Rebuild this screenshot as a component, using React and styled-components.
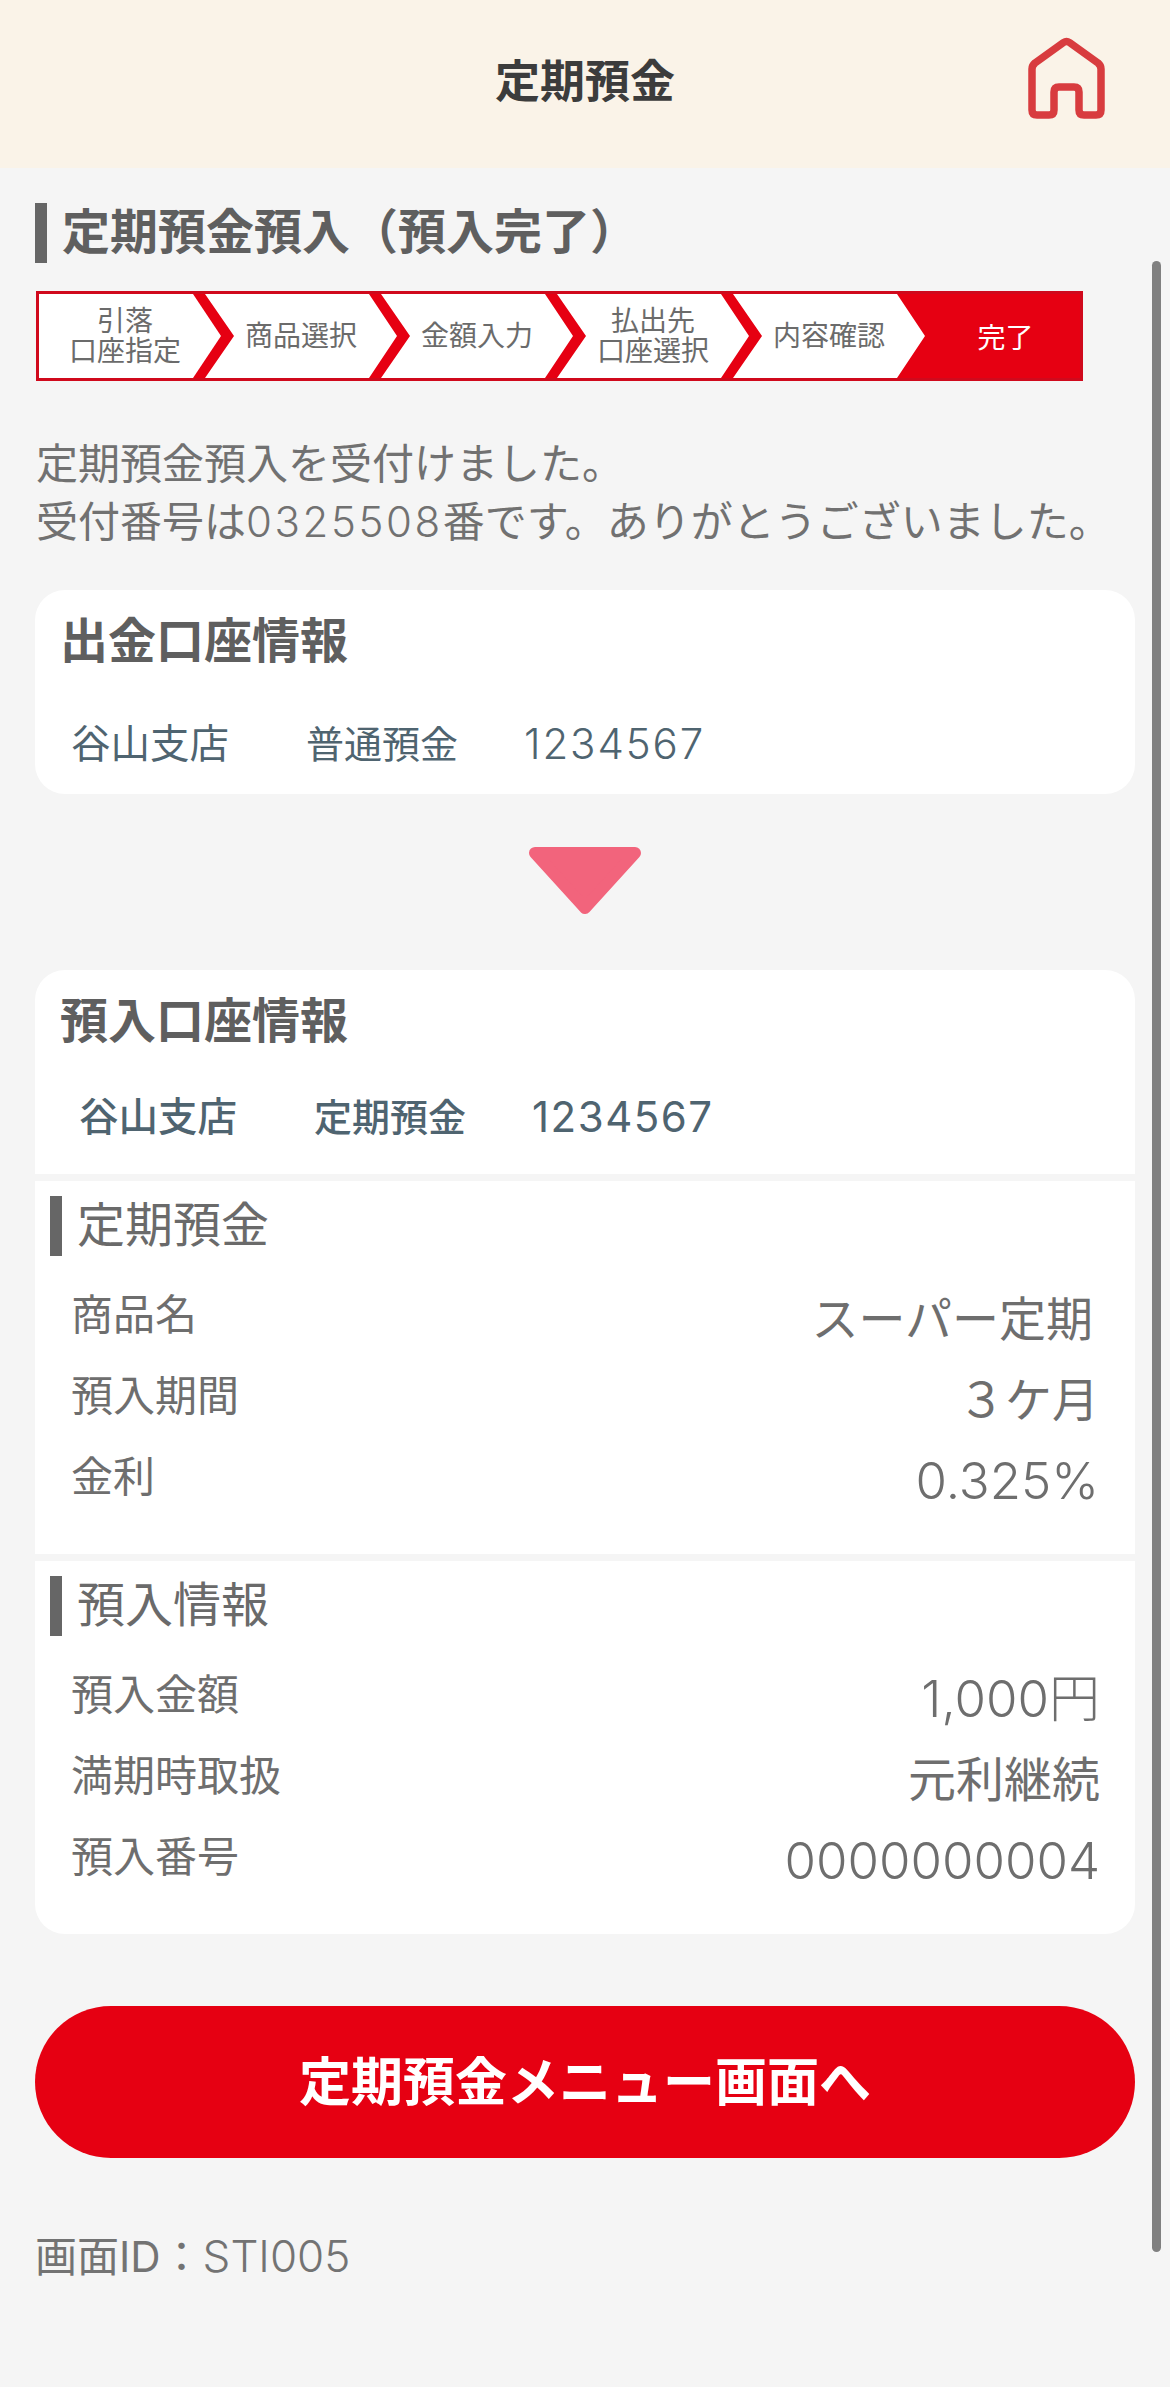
import React from 'react'
import styled, { createGlobalStyle } from 'styled-components'

const GlobalStyle = createGlobalStyle`
  html, body {
    margin: 0;
    padding: 0;
    background: #f5f5f5;
  }
  body {
    font-family: "Inter", "Noto Sans CJK JP", sans-serif;
    color: #6e6e6e;
  }
`

const Page = styled.div`
  position: relative;
  width: 1170px;
  height: 2387px;
  overflow: hidden;
  background: #f5f5f5;
`
const Header = styled.header`
  height: 168px;
  box-sizing: border-box;
  padding: 0 65px 12px;
  background: #faf3e8;
  display: grid;
  grid-template-columns: 1fr auto 1fr;
  align-items: center;
`
const HeaderTitle = styled.h1`
  grid-column: 2;
  margin: 0;
  font-size: 45px;
  font-weight: 700;
  color: #3c3c3c;
`
const HomeButton = styled.a`
  grid-column: 3;
  justify-self: end;
  display: block;
  width: 77px;
  height: 82px;
`
const Main = styled.main`
  padding: 0 35px;
`
const PageTitle = styled.h2`
  margin: 35px 0 0;
  height: 60px;
  display: flex;
  align-items: flex-start;
  gap: 15px;
  font-size: 48px;
  line-height: 58px;
  font-weight: 700;
  color: #5f5f5f;
  &::before {
    content: "";
    width: 12px;
    height: 60px;
    background: #666;
  }
`
const Stepper = styled.ol`
  list-style: none;
  margin: 28px 0 0 1px;
  padding: 3px;
  width: 1047px;
  height: 90px;
  box-sizing: border-box;
  display: flex;
  background: #e60012;
  box-shadow: inset 0 0 0 3px #d0091c;
`
const Step = styled.li`
  width: 192px;
  margin-left: -16px;
  flex: none;
  display: flex;
  align-items: center;
  justify-content: center;
  text-align: center;
  font-size: 28px;
  line-height: 30px;
  color: #6b6b6b;
  background: #fff;
  clip-path: polygon(0 0, 164px 0, 192px 50%, 164px 100%, 0 100%, 29px 50%);
  &:first-child {
    width: 182px;
    margin-left: 0;
    padding-right: 10px;
    box-sizing: border-box;
    clip-path: polygon(0 0, 154px 0, 182px 50%, 154px 100%, 0 100%);
  }
`
const LastStep = styled.li`
  flex: 1;
  padding-left: 6px;
  display: flex;
  align-items: center;
  justify-content: center;
  font-size: 28px;
  color: #fff;
`
const Message = styled.p`
  margin: 54px 0 0 1px;
  font-size: 42px;
  line-height: 58px;
  white-space: nowrap;
  color: #717171;
`
const Num = styled.span`
  font-weight: 300;
  font-size: ${(p) => p.$size || 42}px;
  letter-spacing: ${(p) => p.$spacing || 0}px;
`
const Card = styled.section`
  margin-top: 39px;
  padding: 21px 25px 20px;
  height: 204px;
  box-sizing: border-box;
  background: #fff;
  border-radius: 30px;
`
const CardTitle = styled.h3`
  margin: 0;
  font-size: 48px;
  line-height: 60px;
  font-weight: 700;
  color: #5f5f5f;
`
const Account = styled.div`
  display: flex;
  margin: ${(p) => (p.$strong ? '36px' : '43px')} 0 0 ${(p) => (p.$strong ? '19px' : '11px')};
  font-size: 39.5px;
  line-height: 60px;
  font-weight: ${(p) => (p.$strong ? 500 : 400)};
  color: #4f6470;
`
const AccountName = styled.span`
  width: 235px;
`
const AccountType = styled.span`
  width: 218px;
  font-size: 38px;
`
const AccountNumber = styled.span`
  font-weight: ${(p) => (p.$strong ? 400 : 300)};
  font-size: 42px;
  letter-spacing: ${(p) => (p.$strong ? 1.5 : 1.9)}px;
`
const ArrowWrap = styled.div`
  margin-top: 53px;
  height: 67px;
  display: flex;
  justify-content: center;
`
const DetailStack = styled.section`
  margin-top: 56px;
  display: flex;
  flex-direction: column;
  gap: 7px;
`
const DetailHead = styled.div`
  height: 204px;
  box-sizing: border-box;
  padding: 21px 25px 0;
  background: #fff;
  border-radius: 30px 30px 0 0;
`
const DetailBlock = styled.div`
  height: 373px;
  box-sizing: border-box;
  padding: 15px 15px 0;
  background: #fff;
  border-radius: ${(p) => (p.$last ? '0 0 30px 30px' : '0')};
`
const BlockTitle = styled.h4`
  margin: 0 0 20px;
  height: 60px;
  display: flex;
  align-items: flex-start;
  gap: 15px;
  font-size: 48px;
  line-height: 58px;
  font-weight: 400;
  color: #6a6a6a;
  &::before {
    content: "";
    width: 12px;
    height: 60px;
    background: #666;
  }
`
const Row = styled.div`
  height: 81px;
  padding: 0 20px 0 21px;
  display: flex;
  justify-content: space-between;
  align-items: flex-start;
`
const Label = styled.span`
  font-size: 42px;
  line-height: 77px;
  color: #6e6e6e;
`
const Value = styled.span`
  font-size: ${(p) => p.$size || 47}px;
  line-height: 85px;
  color: #6e6e6e;
  margin-right: ${(p) => p.$inset || 0}px;
  font-weight: 400;
`
const NumValue = styled(Value)`
  font-size: 51px;
  font-weight: 300;
`
const MenuButton = styled.button`
  display: block;
  width: 100%;
  height: 152px;
  margin-top: 72px;
  padding: 0 0 8px;
  border: none;
  border-radius: 76px;
  background: #e60012;
  color: #fff;
  font-family: inherit;
  font-size: 52px;
  font-weight: 700;
`
const ScreenId = styled.p`
  margin: 68px 0 0;
  font-size: 42px;
  line-height: 60px;
  color: #737373;
`
const Scrollbar = styled.div`
  position: absolute;
  left: 1152px;
  top: 261px;
  width: 9px;
  height: 1991px;
  border-radius: 5px;
  background: #808080;
`

const HomeIcon = () => (
  <svg width="77" height="82" viewBox="0 0 77 82" fill="none" stroke="#d83c3f" strokeWidth="7.5" strokeLinejoin="round">
    <path d="M35.5 5.5Q38.5 3.5 41.5 5.5L70 26Q73 28.5 73 32L73 73Q73 78 68 78L56 78Q51 78 51 73L51 55Q51 50 46 50L31 50Q26 50 26 55L26 73Q26 78 21 78L9 78Q4 78 4 73L4 32Q4 28.5 7 26Z" />
  </svg>
)

const DownArrow = () => (
  <svg width="114" height="67" viewBox="0 0 114 67">
    <path d="M7 6L107 6L57 61Z" fill="#f2647c" stroke="#f2647c" strokeWidth="12" strokeLinejoin="round" />
  </svg>
)

const steps = [['引落', '口座指定'], ['商品選択'], ['金額入力'], ['払出先', '口座選択'], ['内容確認']]

const App = () => {
  return (
    <Page>
      <GlobalStyle />
      <Header>
        <HeaderTitle>定期預金</HeaderTitle>
        <HomeButton><HomeIcon /></HomeButton>
      </Header>
      <Main>
        <PageTitle>定期預金預入（預入完了）</PageTitle>
        <Stepper>
          {steps.map((lines) => (
            <Step key={lines.join('')}>
              <span>{lines.map((l, i) => <React.Fragment key={l}>{i > 0 && <br />}{l}</React.Fragment>)}</span>
            </Step>
          ))}
          <LastStep>完了</LastStep>
        </Stepper>
        <Message>
          定期預金預入を受付けました。<br />
          受付番号は<Num $spacing={2.6}>0325508</Num>番です。ありがとうございました。
        </Message>
        <Card>
          <CardTitle>出金口座情報</CardTitle>
          <Account>
            <AccountName>谷山支店</AccountName>
            <AccountType>普通預金</AccountType>
            <AccountNumber>1234567</AccountNumber>
          </Account>
        </Card>
        <ArrowWrap><DownArrow /></ArrowWrap>
        <DetailStack>
          <DetailHead>
            <CardTitle>預入口座情報</CardTitle>
            <Account $strong>
              <AccountName>谷山支店</AccountName>
              <AccountType>定期預金</AccountType>
              <AccountNumber $strong>1234567</AccountNumber>
            </Account>
          </DetailHead>
          <DetailBlock>
            <BlockTitle>定期預金</BlockTitle>
            <Row><Label>商品名</Label><Value $inset={7}>スーパー定期</Value></Row>
            <Row><Label>預入期間</Label><Value $inset={1}>３ケ月</Value></Row>
            <Row><Label>金利</Label><NumValue $inset={1}>0.325%</NumValue></Row>
          </DetailBlock>
          <DetailBlock $last>
            <BlockTitle>預入情報</BlockTitle>
            <Row><Label>預入金額</Label><NumValue>1,000円</NumValue></Row>
            <Row><Label>満期時取扱</Label><Value $size={48}>元利継続</Value></Row>
            <Row><Label>預入番号</Label><NumValue>0000000004</NumValue></Row>
          </DetailBlock>
        </DetailStack>
        <MenuButton>定期預金メニュー画面へ</MenuButton>
        <ScreenId>画面ID：<Num $size={44}>STI005</Num></ScreenId>
      </Main>
      <Scrollbar />
    </Page>
  )
}

export default App
